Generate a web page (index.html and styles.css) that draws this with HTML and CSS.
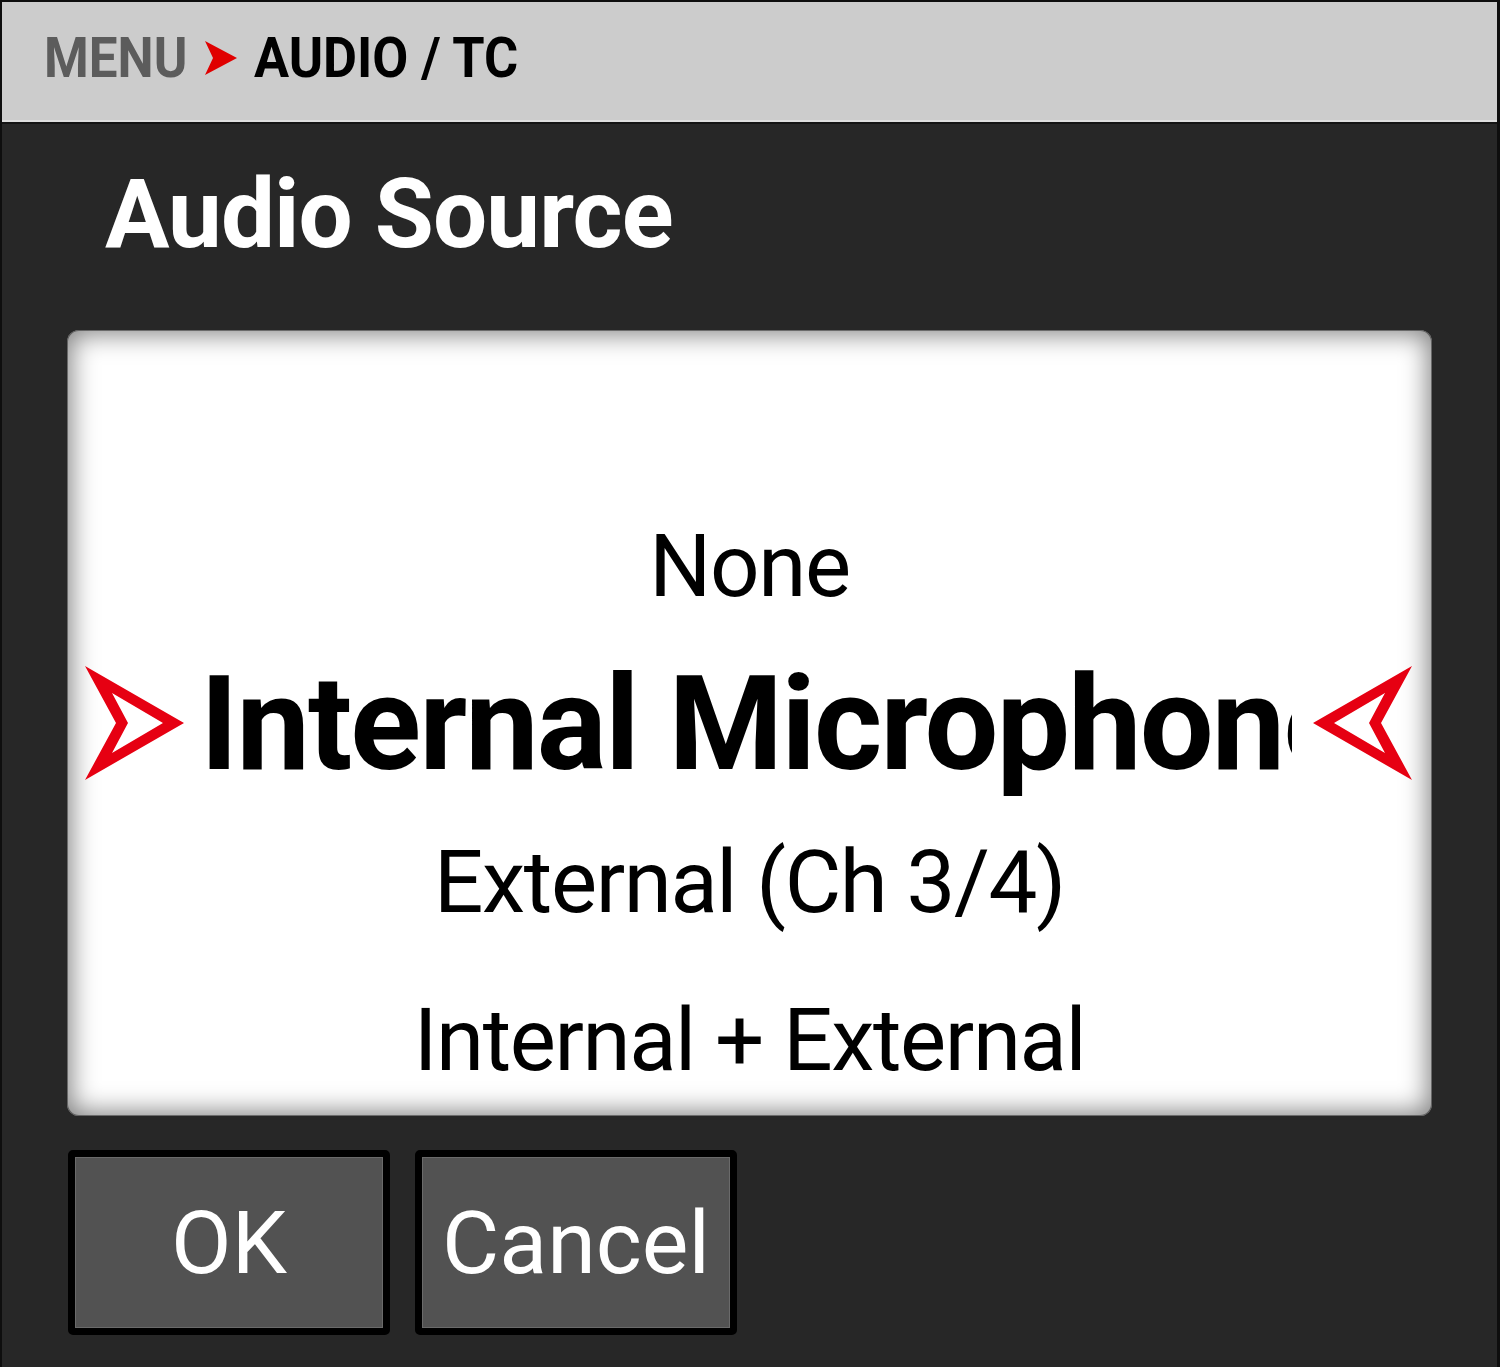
FILE: index.html
```html
<!DOCTYPE html>
<html>
<head>
<meta charset="utf-8">
<link rel="stylesheet" href="styles.css">
</head>
<body>
<div class="screen">
  <div class="topbar">
    <div class="crumbs">
      <span class="crumb-menu">MENU</span>
      <svg class="crumb-arrow" width="34" height="36" viewBox="0 0 34 36"><polygon points="1,1 33,18 1,35 9,18" fill="#e00000"/></svg>
      <span class="crumb-cur">AUDIO / TC</span>
    </div>
  </div>
  <div class="title">Audio Source</div>
  <div class="panel">
    <div class="row">None</div>
    <div class="row row-sel">
      <svg class="sel-arrow" width="102" height="118" viewBox="0 0 102 118"><path fill-rule="evenodd" fill="#e60012" d="M1,1 L100,58 L1,115 L32,58 Z M28,28 L44,58 L28,88 L79,58 Z"/></svg>
      <div class="sel-text">Internal Microphone</div>
      <svg class="sel-arrow sel-arrow-r" width="102" height="118" viewBox="0 0 102 118"><path fill-rule="evenodd" fill="#e60012" d="M101,1 L2,58 L101,115 L70,58 Z M74,28 L58,58 L74,88 L23,58 Z"/></svg>
    </div>
    <div class="row">External (Ch 3/4)</div>
    <div class="row">Internal + External</div>
  </div>
  <div class="buttons">
    <div class="btn">OK</div>
    <div class="btn">Cancel</div>
  </div>
</div>
</body>
</html>
```
FILE: styles.css
```css
html, body {
  margin: 0;
  padding: 0;
}
body {
  background: #0e0e0e;
  font-family: Roboto, "Liberation Sans", sans-serif;
}
.screen {
  margin: 2px 3px 0 2px;
  height: 1365px;
  background: #272727;
  overflow: hidden;
}
.topbar {
  height: 118px;
  background: #cccccc;
  border-bottom: 2px solid #dedede;
  box-shadow: 0 2px 0 #141414;
  display: flex;
  align-items: center;
}
.crumbs {
  display: flex;
  align-items: center;
  padding-left: 42px;
  margin-top: -6px;
}
.crumb-menu, .crumb-cur {
  font-size: 55px;
  font-weight: 700;
  line-height: 60px;
  display: inline-block;
  transform-origin: left center;
  white-space: nowrap;
}
.crumb-menu {
  color: #5c5c5c;
  transform: scaleX(0.93);
  width: 142px;
}
.crumb-cur {
  color: #000;
  transform: scaleX(0.95);
}
.crumb-arrow {
  margin: 0 16px 0 18px;
  display: block;
}
.title {
  color: #fff;
  font-size: 96px;
  font-weight: 700;
  line-height: 96px;
  padding: 44px 0 68px 103px;
  letter-spacing: -0.9px;
}
.panel {
  margin-left: 65px;
  width: 1365px;
  height: 786px;
  box-sizing: border-box;
  background: #fff;
  border-radius: 12px;
  box-shadow: inset 0 0 26px 4px rgba(0,0,0,0.5), inset 0 0 0 1px rgba(0,0,0,0.4);
  padding-top: 157px;
  overflow: hidden;
}
.row {
  height: 158px;
  display: flex;
  align-items: center;
  justify-content: center;
  font-size: 87px;
  line-height: 158px;
  letter-spacing: -1.4px;
  color: #000;
  white-space: nowrap;
}
.row-sel {
  justify-content: flex-start;
  padding: 0 19px 0 17px;
  letter-spacing: 0;
}
.sel-arrow {
  display: block;
  flex: none;
}
.sel-text {
  flex: 1;
  margin: 0 19px 0 14px;
  overflow: hidden;
  white-space: nowrap;
  font-size: 131px;
  font-weight: 700;
  letter-spacing: -1.9px;
}
.buttons {
  display: flex;
  gap: 25px;
  margin: 34px 0 0 66px;
}
.btn {
  width: 322px;
  height: 185px;
  box-sizing: border-box;
  border: 7px solid #000;
  border-radius: 5px;
  background: #525252;
  box-shadow: inset 0 0 0 1px #6a6a6a;
  color: #fff;
  font-size: 88px;
  display: flex;
  align-items: center;
  justify-content: center;
}
```
